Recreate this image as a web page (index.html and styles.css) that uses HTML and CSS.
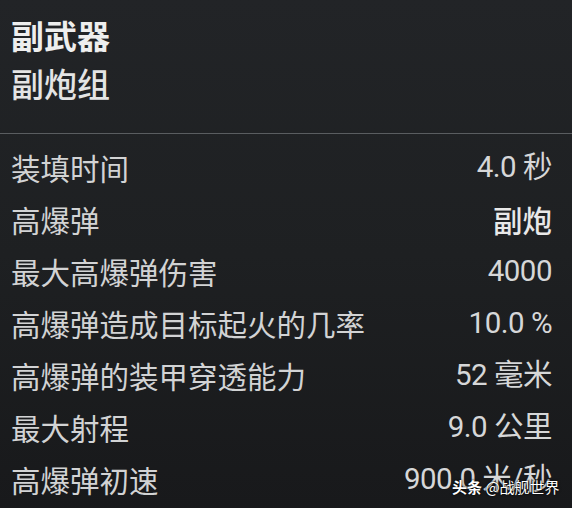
FILE: index.html
```html
<!DOCTYPE html>
<html lang="zh">
<head>
<meta charset="utf-8">
<link rel="stylesheet" href="styles.css">
</head>
<body>
<div class="panel">
  <header class="head">
    <div class="title">副武器</div>
    <div class="subtitle">副炮组</div>
  </header>
  <div class="divider"></div>
  <div class="rows">
    <div class="row"><span class="label">装填时间</span><span class="value">4.0 秒</span></div>
    <div class="row"><span class="label">高爆弹</span><span class="value strong">副炮</span></div>
    <div class="row"><span class="label">最大高爆弹伤害</span><span class="value">4000</span></div>
    <div class="row"><span class="label">高爆弹造成目标起火的几率</span><span class="value">10.0 %</span></div>
    <div class="row"><span class="label">高爆弹的装甲穿透能力</span><span class="value">52 毫米</span></div>
    <div class="row"><span class="label">最大射程</span><span class="value">9.0 公里</span></div>
    <div class="row"><span class="label">高爆弹初速</span><span class="value">900.0 米/秒</span></div>
  </div>
  <div class="watermark"><b class="wm-brand">头条</b> @战舰世界</div>
</div>
</body>
</html>
```
FILE: styles.css
```css
html, body {
  margin: 0;
  padding: 0;
  width: 572px;
  height: 508px;
  overflow: hidden;
  background: #1d1f21;
}
.panel {
  position: relative;
  width: 572px;
  height: 508px;
  background: linear-gradient(180deg, #222427 0%, #1e2022 50%, #18191b 100%);
  font-family: "Noto Sans CJK SC", "Noto Sans", sans-serif;
  color: #d4d5d6;
  box-sizing: border-box;
}
.head {
  padding: 11px 12px 0 11px;
  height: 118px;
  box-sizing: border-box;
}
.title {
  font-size: 33px;
  font-weight: 700;
  line-height: 48px;
  color: #eeeeee;
}
.subtitle {
  font-size: 33px;
  font-weight: 500;
  line-height: 48px;
  color: #e4e4e4;
}
.divider {
  height: 1px;
  background: #5a5d60;
  margin-top: 15px;
}
.rows {
  display: flex;
  flex-direction: column;
  padding: 7px 20px 0 11px;
}
.row {
  display: flex;
  justify-content: space-between;
  align-items: center;
  height: 52px;
  font-size: 29.5px;
  line-height: 52px;
}
.label {
  color: #d2d3d4;
}
.value {
  color: #d6d7d8;
  font-family: "Roboto", "Noto Sans CJK SC", sans-serif;
  font-weight: 400;
  letter-spacing: -0.5px;
}
.value.strong {
  font-family: "Noto Sans CJK SC", sans-serif;
  font-weight: 500;
  color: #e8e8e8;
  letter-spacing: 0;
}
.watermark {
  position: absolute;
  left: 452px;
  top: 476px;
  font-size: 15px;
  line-height: 22px;
  color: #ffffff;
  font-weight: 400;
  text-shadow: 0 0 3px rgba(0,0,0,0.9), 0 0 1px #000;
  white-space: nowrap;
}
.wm-brand {
  font-weight: 700;
}
```
